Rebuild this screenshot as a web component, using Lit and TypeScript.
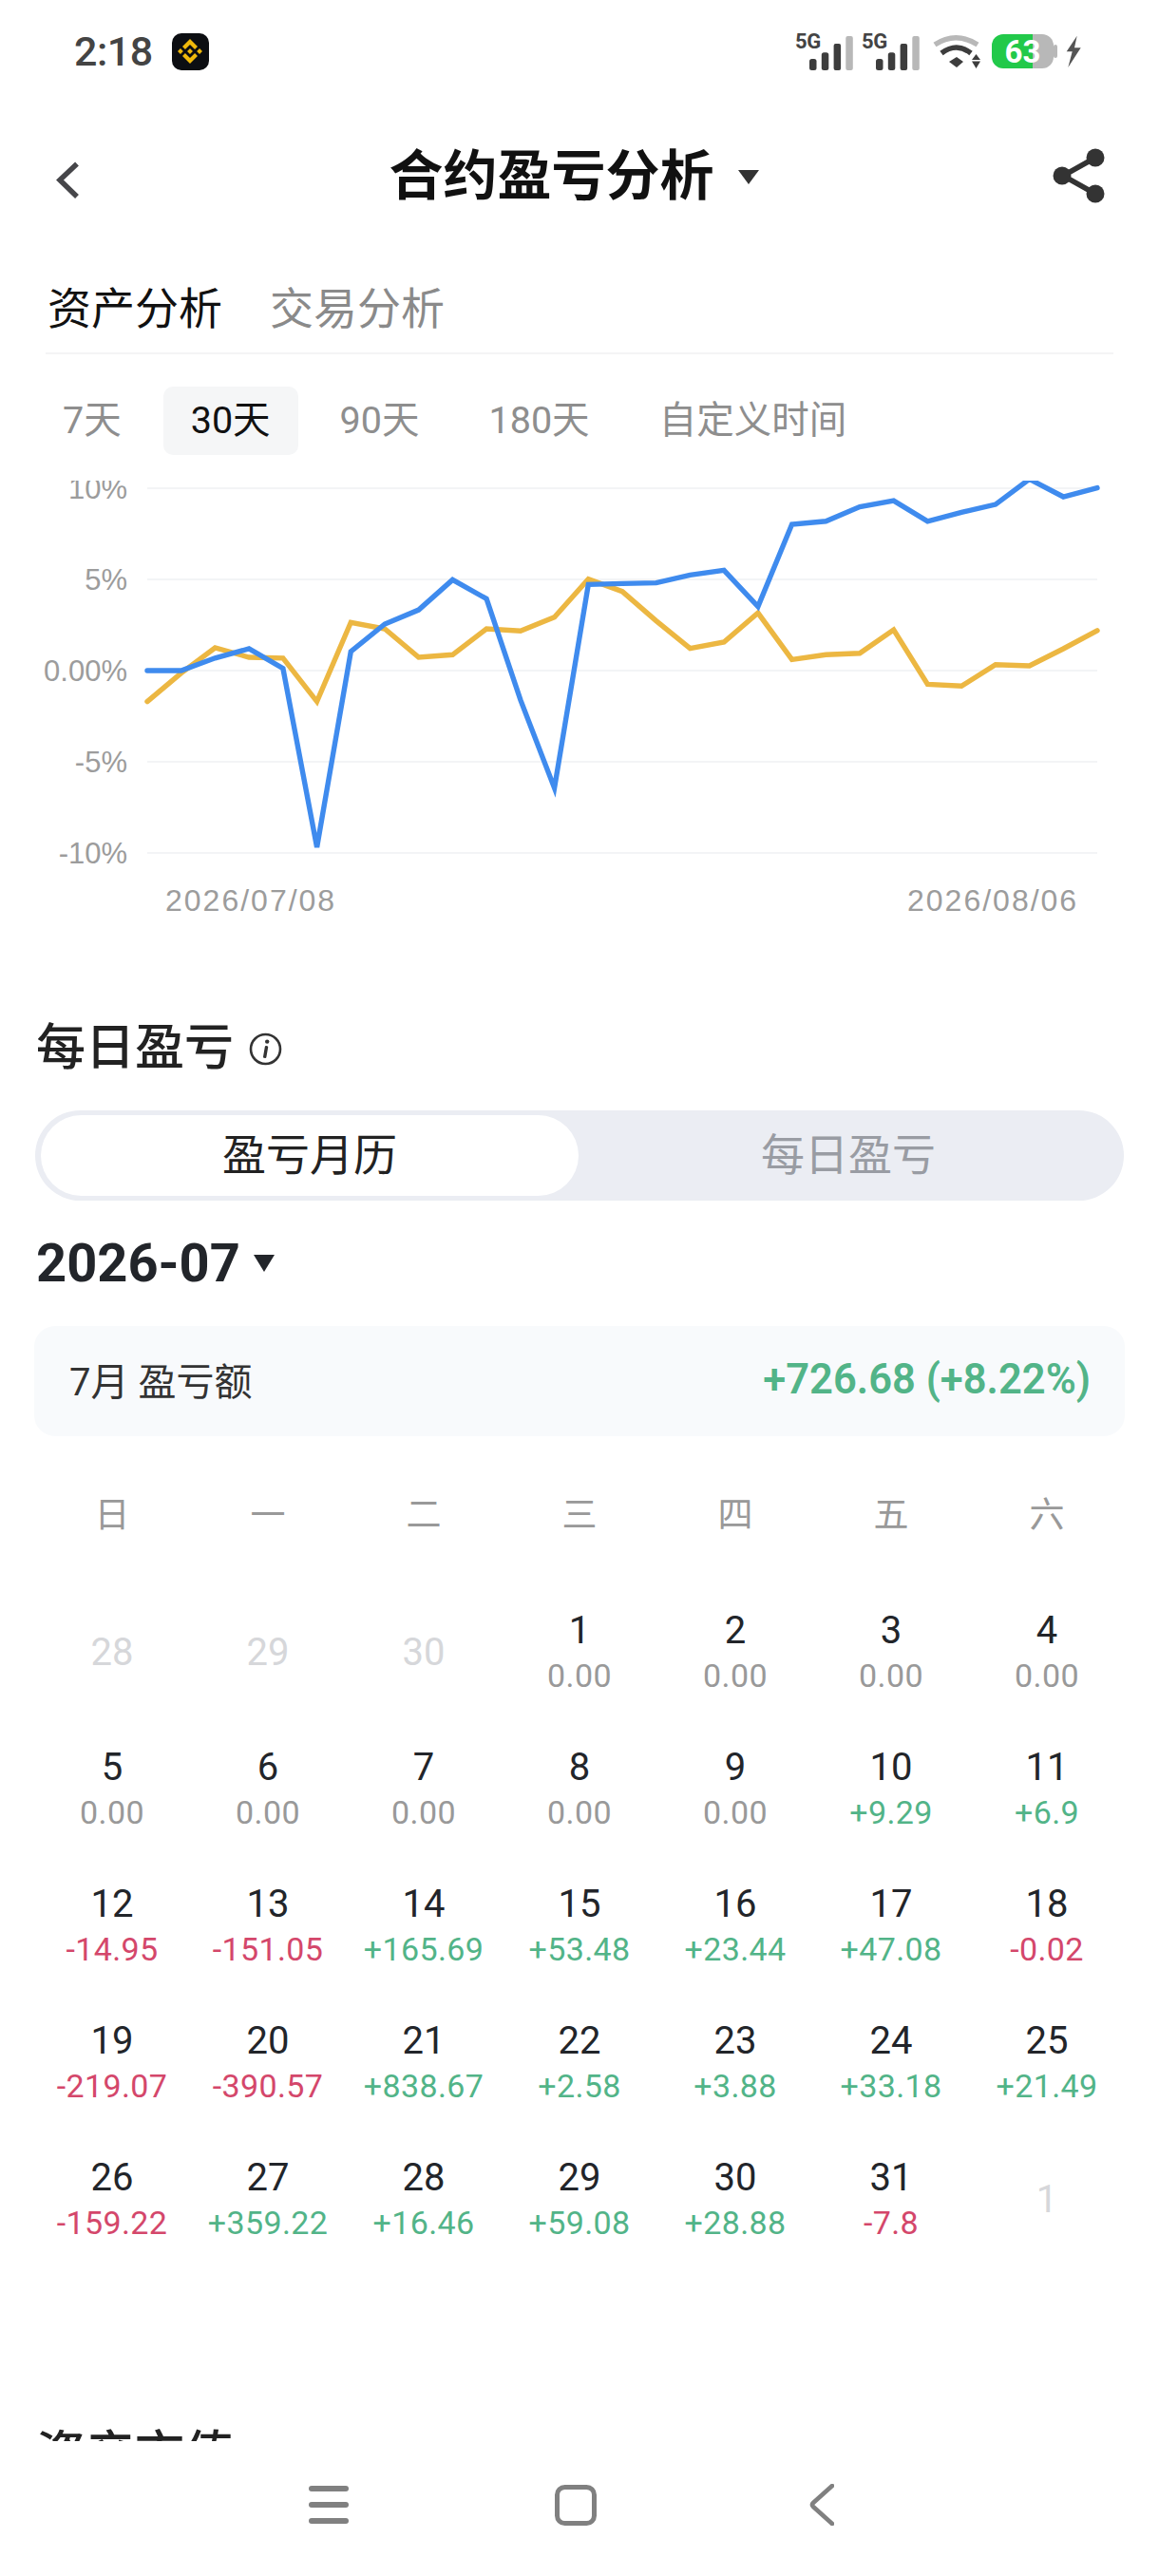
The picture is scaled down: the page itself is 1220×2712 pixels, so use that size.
import { LitElement, html, css, svg } from 'lit';
import { customElement, state } from 'lit/decorators.js';

// percent values read off the reference chart, 29 points
const BLUE = [0, 0, 0.69, 1.2, 0.12, -9.69, 1.04, 2.55, 3.33, 4.98, 3.94, -1.61, -6.44, 4.72, 4.77, 4.81, 5.24, 5.5, 3.51, 8.02, 8.19, 8.98, 9.32, 8.19, 8.68, 9.11, 10.5, 9.53, 10.02];
const YELLOW = [-1.7, -0.14, 1.25, 0.73, 0.69, -1.7, 2.64, 2.29, 0.73, 0.87, 2.29, 2.17, 2.93, 5.02, 4.34, 2.73, 1.22, 1.56, 3.16, 0.61, 0.87, 0.95, 2.24, -0.75, -0.85, 0.33, 0.26, 1.2, 2.2];
const TICKS = [
  { y: 8, label: '10%' },
  { y: 104, label: '5%' },
  { y: 200, label: '0.00%' },
  { y: 296, label: '-5%' },
  { y: 392, label: '-10%' },
];

interface Day { d: number; v?: string; muted?: boolean }

const DAYS: Day[] = [
  { d: 28, muted: true }, { d: 29, muted: true }, { d: 30, muted: true },
  { d: 1, v: '0.00' }, { d: 2, v: '0.00' }, { d: 3, v: '0.00' }, { d: 4, v: '0.00' },
  { d: 5, v: '0.00' }, { d: 6, v: '0.00' }, { d: 7, v: '0.00' }, { d: 8, v: '0.00' }, { d: 9, v: '0.00' },
  { d: 10, v: '+9.29' }, { d: 11, v: '+6.9' },
  { d: 12, v: '-14.95' }, { d: 13, v: '-151.05' }, { d: 14, v: '+165.69' }, { d: 15, v: '+53.48' },
  { d: 16, v: '+23.44' }, { d: 17, v: '+47.08' }, { d: 18, v: '-0.02' },
  { d: 19, v: '-219.07' }, { d: 20, v: '-390.57' }, { d: 21, v: '+838.67' }, { d: 22, v: '+2.58' },
  { d: 23, v: '+3.88' }, { d: 24, v: '+33.18' }, { d: 25, v: '+21.49' },
  { d: 26, v: '-159.22' }, { d: 27, v: '+359.22' }, { d: 28, v: '+16.46' }, { d: 29, v: '+59.08' },
  { d: 30, v: '+28.88' }, { d: 31, v: '-7.8' }, { d: 1, muted: true },
];

const points = (values: number[]) =>
  values.map((v, i) => `${(155 + (i * 1000) / 28).toFixed(1)},${(200 - v * 19.2).toFixed(1)}`).join(' ');

const signal = () => html`
  <div class="sig">
    <span class="net">5G</span>
    <svg width="46" height="39" viewBox="15 0 46 39">
      <rect x="15" y="27" width="7.5" height="12" rx="2.5" fill="#3d3d3d"></rect>
      <rect x="27.8" y="20.3" width="7.5" height="18.7" rx="2.5" fill="#3d3d3d"></rect>
      <rect x="40.6" y="11" width="7.5" height="28" rx="2" fill="#3d3d3d"></rect>
      <rect x="53.3" y="3" width="7.5" height="36" rx="2" fill="#b8b8b8"></rect>
    </svg>
  </div>
`;

@customElement('app-root')
export class AppRoot extends LitElement {
  @state() period = '30天';

  static styles = css`
    :host {
      display: flex;
      flex-direction: column;
      width: 1220px;
      height: 2712px;
      overflow: hidden;
      background: #fff;
      color: #1e2026;
      font-family: Roboto, "Noto Sans CJK SC", sans-serif;
    }
    svg { display: block; flex: none; }

    .page { height: 2570px; flex: none; overflow: hidden; }

    .status {
      height: 108px;
      display: flex;
      align-items: center;
      padding: 0 82px 0 78px;
    }
    .time { font-size: 43px; font-weight: 500; color: #444; letter-spacing: -0.5px; line-height: 50px; }
    .app-icon {
      width: 39px;
      height: 39px;
      margin-left: 20px;
      border-radius: 10px;
      background: #0c0e12;
      display: flex;
      align-items: center;
      justify-content: center;
    }
    .status-right { margin-left: auto; display: flex; align-items: center; }
    .sig { display: flex; align-items: flex-end; height: 39px; }
    .sig + .sig { margin-left: 9px; }
    .net {
      align-self: flex-start;
      width: 28px;
      margin-right: -13px;
      font-size: 22px;
      line-height: 17px;
      font-weight: 700;
      color: #444;
      letter-spacing: -0.3px;
    }
    .wifi { margin-left: 14px; }
    .battery {
      position: relative;
      width: 65px;
      height: 36px;
      margin: 0 4px 0 12px;
      border-radius: 12px;
      background: linear-gradient(90deg, #22c94a 43px, #b8b8b8 43px);
      font-size: 33px;
      line-height: 37px;
      font-weight: 700;
      text-align: center;
      color: #fff;
    }
    .battery::after {
      content: '';
      position: absolute;
      right: -4px;
      top: 11px;
      width: 4px;
      height: 14px;
      border-radius: 2px;
      background: #b8b8b8;
    }
    .bolt { margin-left: 8px; }

    .header {
      height: 154px;
      display: grid;
      grid-template-columns: 1fr auto 1fr;
      align-items: center;
      padding: 0 56px 0 58px;
    }
    .back { margin-top: 9px; }
    .share { justify-self: end; }
    .title {
      display: flex;
      align-items: center;
      gap: 25px;
      margin-right: 14px;
      padding-top: 2px;
      font-size: 57px;
      line-height: 72px;
      font-weight: 700;
      color: #111;
    }

    .tabs {
      margin: 0 48px;
      padding: 33px 2px 16px;
      display: flex;
      gap: 50px;
      font-size: 46px;
      line-height: 60px;
      color: #8a8a8a;
      border-bottom: 2px solid #f4f4f5;
    }
    .tabs .on { color: #111; }

    .periods {
      display: flex;
      gap: 15px;
      padding: 34px 0 0 37px;
      font-size: 39.5px;
      color: #8e8e8e;
    }
    .period {
      height: 72px;
      line-height: 72px;
      padding: 0 29px;
      border-radius: 10px;
    }
    .period.on { background: #f5f6f7; color: #111; }

    .chart { margin-top: 27px; }
    .chart text { font-family: "Liberation Sans", sans-serif; font-size: 31px; fill: #9c9c9c; }
    .chart .date { font-size: 32px; letter-spacing: 2px; }

    .section {
      display: flex;
      align-items: center;
      gap: 16px;
      padding-left: 38px;
      font-size: 52px;
      line-height: 64px;
      font-weight: 500;
      color: #222;
    }
    .daily { margin-top: 86px; }
    .assets { margin-top: 165px; }

    .segment {
      margin: 33px 37px 0;
      height: 95px;
      padding: 5px 6px;
      box-sizing: border-box;
      display: grid;
      grid-template-columns: 566px 1fr;
      border-radius: 48px;
      background: #ebedf3;
      font-size: 46px;
      text-align: center;
      color: #999ca3;
    }
    .segment div { line-height: 85px; }
    .segment .on { background: #fff; color: #222; border-radius: 43px; }

    .month {
      margin-top: 34px;
      padding-left: 38px;
      display: flex;
      align-items: center;
      gap: 14px;
      font-size: 56px;
      line-height: 64px;
      font-weight: 700;
      color: #22252a;
    }

    .summary {
      margin: 34px 36px 0;
      height: 116px;
      padding: 0 36px 4px 37px;
      box-sizing: border-box;
      border-radius: 22px;
      background: #f8fafc;
      display: flex;
      align-items: center;
      justify-content: space-between;
      font-size: 40px;
      color: #333;
    }
    .summary b { font-size: 43.5px; font-weight: 600; color: #52b488; }

    .weekdays, .days {
      margin: 0 36px;
      display: grid;
      grid-template-columns: repeat(7, 164px);
      text-align: center;
    }
    .weekdays { margin-top: 54px; font-size: 37px; line-height: 60px; color: #999; }
    .days { margin-top: 42px; grid-auto-rows: 144px; }
    .day {
      display: flex;
      flex-direction: column;
      align-items: center;
      justify-content: center;
      gap: 2px;
      font-size: 40px;
      line-height: 46px;
      color: #22252a;
    }
    .day.muted { color: #d6d7da; }
    .day span { font-size: 34px; line-height: 44px; letter-spacing: 0.4px; color: #999; }
    .day span.up { color: #52b488; }
    .day span.down { color: #d4476b; }

    .nav {
      height: 142px;
      flex: none;
      display: flex;
      align-items: center;
      padding: 0 0 8px 325px;
      box-sizing: border-box;
    }
    .nav svg + svg { margin-left: 217px; }
    .nav svg:last-child { margin-left: 224px; }
  `;

  renderChart() {
    return html`
      <svg class="chart" width="1220" height="480" viewBox="0 0 1220 480">
        ${TICKS.map(
          (t) => svg`
            <line x1="155" x2="1155" y1=${t.y} y2=${t.y} stroke="#f3f4f6" stroke-width="2"></line>
            <text x="134" y=${t.y + 11} text-anchor="end">${t.label}</text>
          `
        )}
        <polyline points=${points(YELLOW)} fill="none" stroke="#ecb742" stroke-width="5.4" stroke-linecap="round" stroke-linejoin="miter"></polyline>
        <polyline points=${points(BLUE)} fill="none" stroke="#3f8bee" stroke-width="5.4" stroke-linecap="round" stroke-linejoin="miter"></polyline>
        <text class="date" x="174" y="453">2026/07/08</text>
        <text class="date" x="955" y="453">2026/08/06</text>
      </svg>
    `;
  }

  renderDay(day: Day) {
    const tone = day.v?.startsWith('+') ? 'up' : day.v?.startsWith('-') ? 'down' : '';
    return html`
      <div class="day ${day.muted ? 'muted' : ''}">
        ${day.d}
        ${day.v ? html`<span class=${tone}>${day.v}</span>` : ''}
      </div>
    `;
  }

  render() {
    return html`
      <div class="page">
        <div class="status">
          <div class="time">2:18</div>
          <div class="app-icon">
            <svg width="26" height="26" viewBox="0 0 126.61 126.61" fill="#f0b90b">
              <path d="M38.73 53.2l24.59-24.58 24.6 24.6 14.3-14.31L63.32 0 24.42 38.9l14.31 14.3z"></path>
              <path d="M0 63.31l14.3-14.31 14.31 14.31-14.31 14.3z"></path>
              <path d="M38.73 73.41l24.59 24.59 24.6-24.6 14.31 14.29-38.9 38.91-38.91-38.88-.02-.02 14.33-14.29z"></path>
              <path d="M98.01 63.31l14.3-14.31 14.31 14.31-14.31 14.3z"></path>
              <path d="M77.83 63.3L63.32 48.78 52.59 59.51l-1.24 1.23-2.54 2.54 14.51 14.5 14.51-14.47.01-.01z"></path>
            </svg>
          </div>
          <div class="status-right">
            ${signal()} ${signal()}
            <svg class="wifi" width="50" height="37" viewBox="0 0 50 37">
              <path d="M2 11 Q24 -3.5 47 11" fill="none" stroke="#b8b8b8" stroke-width="5.5"></path>
              <path d="M9 20 Q25 8 40 20" fill="none" stroke="#3d3d3d" stroke-width="5.5"></path>
              <path d="M17 29 L25 24 L32 29 L25 35 Z" fill="#3d3d3d"></path>
              <path d="M41 27 L45.5 21 L50 27 Z M41 28.5 L50 28.5 L45.5 36 Z" fill="#3d3d3d"></path>
            </svg>
            <div class="battery">63</div>
            <svg class="bolt" width="17" height="35" viewBox="0 0 17 35">
              <path d="M12.7 0.7 L1.7 17.3 H7.7 L3.3 34 L16.7 13.3 H10 Z" fill="#555"></path>
            </svg>
          </div>
        </div>

        <div class="header">
          <svg class="back" width="26" height="40" viewBox="0 0 26 40">
            <path d="M23 2.5 L5 19.5 L23 37" fill="none" stroke="#46464a" stroke-width="5.5"></path>
          </svg>
          <div class="title">
            合约盈亏分析
            <svg width="22" height="15" viewBox="0 0 22 15"><path d="M0 0 H22 L11 15 Z" fill="#333"></path></svg>
          </div>
          <svg class="share" width="56" height="58" viewBox="0 0 56 58" fill="#333">
            <path d="M45 10 L11 29 L45 48" fill="none" stroke="#333" stroke-width="5.5"></path>
            <circle cx="45" cy="10" r="9.5"></circle>
            <circle cx="10" cy="29" r="9.5"></circle>
            <circle cx="45" cy="48" r="9.5"></circle>
          </svg>
        </div>

        <div class="tabs">
          <div class="on">资产分析</div>
          <div>交易分析</div>
        </div>

        <div class="periods">
          ${['7天', '30天', '90天', '180天', '自定义时间'].map(
            (p) => html`<div class="period ${p === this.period ? 'on' : ''}">${p}</div>`
          )}
        </div>

        ${this.renderChart()}

        <div class="section daily">
          每日盈亏
          <svg width="35" height="35" viewBox="0 0 35 35">
            <circle cx="17.5" cy="17.5" r="15.5" fill="none" stroke="#333" stroke-width="2.6"></circle>
            <rect x="16" y="14" width="3.4" height="13" rx="1.2" fill="#333" transform="rotate(10 17.5 20)"></rect>
            <circle cx="19.2" cy="9.6" r="2.2" fill="#333"></circle>
          </svg>
        </div>

        <div class="segment">
          <div class="on">盈亏月历</div>
          <div>每日盈亏</div>
        </div>

        <div class="month">
          2026-07
          <svg width="22" height="18" viewBox="0 0 22 18"><path d="M0 0 H22 L11 18 Z" fill="#22252a"></path></svg>
        </div>

        <div class="summary">
          <span>7月 盈亏额</span>
          <b>+726.68 (+8.22%)</b>
        </div>

        <div class="weekdays">
          ${['日', '一', '二', '三', '四', '五', '六'].map((w) => html`<div>${w}</div>`)}
        </div>
        <div class="days">${DAYS.map((d) => this.renderDay(d))}</div>

        <div class="section assets">资产市值</div>
      </div>

      <div class="nav">
        <svg width="42" height="40" viewBox="0 0 42 40" fill="#808080">
          <rect x="0" y="0" width="42" height="6" rx="3"></rect>
          <rect x="0" y="17" width="42" height="6" rx="3"></rect>
          <rect x="0" y="34" width="42" height="6" rx="3"></rect>
        </svg>
        <svg width="44" height="43" viewBox="0 0 44 43">
          <rect x="2.5" y="2.5" width="39" height="38" rx="8" fill="none" stroke="#808080" stroke-width="5"></rect>
        </svg>
        <svg width="26" height="44" viewBox="0 0 26 44">
          <path d="M24 2 L4 20 Q2 22 4 24 L24 42" fill="none" stroke="#808080" stroke-width="4.6" stroke-linecap="round"></path>
        </svg>
      </div>
    `;
  }
}
